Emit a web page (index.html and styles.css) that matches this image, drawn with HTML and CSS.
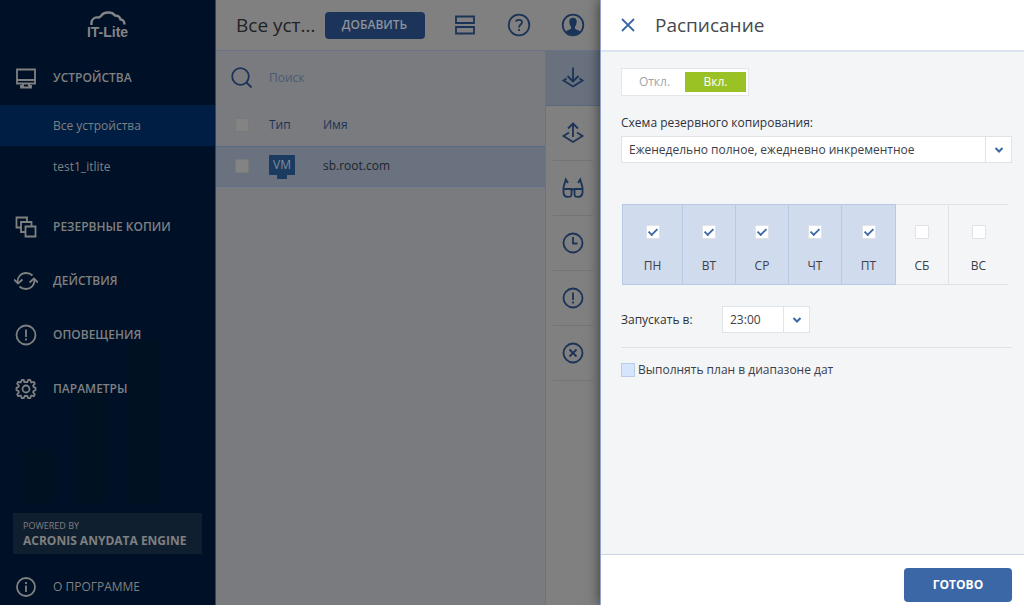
FILE: index.html
```
<!DOCTYPE html>
<html lang="ru">
<head>
<meta charset="utf-8">
<title>Расписание</title>
<meta name="viewport" content="width=device-width, initial-scale=1">
<link rel="stylesheet" href="styles.css">
</head>
<body>
<div class="app">
  <aside class="sidebar">
    <div class="logo">
      <svg class="logo-cloud" width="36" height="14" viewBox="0 0 36 14"><path d="M1.500 14V11C2 8 5 6 8.500 6.500C9.500 6.500 10.500 5.500 11 5C14 .5 22 .5 25 4.500C28 4.500 30 6.500 30.500 8.500C33 8.500 34.500 11 34.500 13.500" fill="none" stroke="currentColor" stroke-width="2.400"/></svg>
      <span class="logo-name">IT-Lite</span>
    </div>
    <nav class="nav">
      <a class="nav-item" href="#"><svg class="ico" width="24" height="24" viewBox="0 0 24 24"><path d="M3 3.500H21V17.500H3ZM3 14H21M9 17.500V20H7V21.500H17V20H15V17.500"/></svg>УСТРОЙСТВА</a>
      <a class="nav-sub nav-sub-active" href="#">Все устройства</a>
      <a class="nav-sub nav-last-sub" href="#">test1_itlite</a>
      <a class="nav-item" href="#"><svg class="ico" width="24" height="24" viewBox="0 0 24 24"><path d="M7 12.500H2.500V2.500H13V6M11 17H7V7H17.500V11M11.500 11.500H21.500V21.500H11.500Z"/></svg>РЕЗЕРВНЫЕ КОПИИ</a>
      <a class="nav-item" href="#"><svg class="ico" width="24" height="24" viewBox="0 0 24 24"><path d="M3.500 14C3 8 7 4 12 4C15 4 17 5 18.500 6.500M0 10.500L4 14.500L8.500 10.500M20.500 10C21 16 17 20 12 20C9 20 7 19 5.500 17.500M24 13.500L20 9.500L15.500 13.500"/></svg>ДЕЙСТВИЯ</a>
      <a class="nav-item" href="#"><svg class="ico" width="24" height="24" viewBox="0 0 24 24"><circle cx="12" cy="12" r="9.500"/><path d="M12 6.500V14M12 15.500V17.500"/></svg>ОПОВЕЩЕНИЯ</a>
      <a class="nav-item" href="#"><svg class="ico" width="24" height="24" viewBox="0 0 24 24"><circle cx="12" cy="12" r="3.500"/><path stroke-linejoin="round" d="M10.200 5.200L9.800 2.800H7.800L6.800 5.500L4.200 4.800L3.200 6.600L4.900 8.800L4.300 10.200L2.500 10.800V13.200L4.300 13.800L4.900 15.200L3.200 17.400L4.200 19.200L6.800 18.500L7.800 21.200H9.800L10.600 19H13.400L14.200 21.200H16.200L17.200 18.500L19.800 19.200L20.800 17.400L19.100 15.200L19.700 13.800L21.500 13.200V10.800L19.700 10.200L19.100 8.800L20.800 6.600L19.800 4.800L17.200 5.500L16.200 2.800H14.200L13.400 5.200Z"/></svg>ПАРАМЕТРЫ</a>
    </nav>
    <div class="powered"><span class="powered-by">POWERED BY</span><span class="powered-name">ACRONIS ANYDATA ENGINE</span></div>
    <a class="about" href="#"><svg class="ico" width="24" height="24" viewBox="0 0 24 24"><circle cx="12" cy="12" r="9"/><path d="M12 7V9M12 10.500V17"/></svg>О ПРОГРАММЕ</a>
  </aside>

  <main class="main">
    <header class="main-head">
      <h1 class="title">Все уст...</h1>
      <button class="add" type="button">ДОБАВИТЬ</button>
      <div class="tools">
        <button class="icon-btn" type="button" aria-label="Вид"><svg class="ico" width="24" height="24" viewBox="0 0 24 24"><path d="M3 3.500H21V10H3ZM3 14H21V20.500H3Z"/></svg></button>
        <button class="icon-btn" type="button" aria-label="Справка"><svg class="ico" width="24" height="24" viewBox="0 0 24 24"><circle cx="12" cy="12" r="10.300"/><path d="M9 8.500C9.500 6.500 15 6 15 9.200C15 11.500 12 11.500 12 14.500M12 16V18"/></svg></button>
        <button class="icon-btn" type="button" aria-label="Учётная запись"><svg class="ico" width="24" height="24" viewBox="0 0 24 24"><circle cx="12" cy="12" r="10.300"/><path class="solid" d="M8.300 8C8.300 3.500 15.700 3.500 15.700 8C15.700 11 15 12.500 14 13.500V15.500C15 17 18 17 19 18.500C16 23 8 23 5 18.500C6 17 9 17 10 15.500V13.500C9 12.500 8.300 11 8.300 8Z"/></svg></button>
      </div>
    </header>
    <div class="main-body">
      <section class="devices">
        <label class="search"><svg class="ico" width="24" height="24" viewBox="0 0 24 24"><circle cx="10.500" cy="10.500" r="8.300"/><path d="M16.500 16.500L21.500 21.500"/></svg><input class="search-input" type="search" placeholder="Поиск" aria-label="Поиск"></label>
        <table class="table">
          <thead><tr><th class="c-check"><input class="check" type="checkbox" aria-label="Выбрать все"></th><th class="c-type">Тип</th><th>Имя</th></tr></thead>
          <tbody><tr><td><input class="check" type="checkbox" aria-label="Выбрать sb.root.com"></td><td><span class="vm">VM</span></td><td>sb.root.com</td></tr></tbody>
        </table>
      </section>
      <div class="rail">
        <button class="rail-btn rail-active" type="button" aria-label="Резервное копирование"><svg class="ico" width="24" height="24" viewBox="0 0 24 24"><path d="M12 1.500V15.500M6.500 10L12 15.500L17.500 10M5.500 12.500L2.500 14.500L12 20.500L21.500 14.500L18.500 12.500"/></svg></button>
        <button class="rail-btn" type="button" aria-label="Восстановление"><svg class="ico" width="24" height="24" viewBox="0 0 24 24"><path d="M12 16V2.500M7 7.500L12 2.500L17 7.500M8 11.500L2.500 15L12 21L21.500 15L16 11.500"/></svg></button>
        <button class="rail-btn" type="button" aria-label="Обзор"><svg class="ico" width="24" height="24" viewBox="0 0 24 24"><path d="M2.500 14V11.500L4.800 3.500L7 7M21.500 14V11.500L19.200 3.500L17 7M2.500 13H10.500V18C10.500 21 9 20.800 6.500 20.800C4 20.800 3 20 2.500 17ZM13.500 13H21.500V17C21 20 20 20.800 17.500 20.800C15 20.800 13.500 21 13.500 18ZM10.500 13.500H13.500"/></svg></button>
        <button class="rail-btn" type="button" aria-label="История"><svg class="ico" width="24" height="24" viewBox="0 0 24 24"><circle cx="12" cy="12" r="9.500"/><path d="M12 6V12.500H16.500"/></svg></button>
        <button class="rail-btn" type="button" aria-label="Оповещения"><svg class="ico" width="24" height="24" viewBox="0 0 24 24"><circle cx="12" cy="12" r="9.500"/><path d="M12 6.500V14M12 15.500V17.500"/></svg></button>
        <button class="rail-btn" type="button" aria-label="Удалить"><svg class="ico" width="24" height="24" viewBox="0 0 24 24"><circle cx="12" cy="12" r="9.500"/><path d="M8.500 8.500L15.500 15.500M15.500 8.500L8.500 15.500"/></svg></button>
      </div>
    </div>
  </main>

  <form class="panel">
    <header class="panel-head">
      <button class="close" type="button" aria-label="Закрыть"><svg class="ico" width="14" height="14" viewBox="0 0 14 14"><path d="M1 1L13 13M13 1L1 13"/></svg></button>
      <h2 class="title">Расписание</h2>
    </header>
    <div class="panel-body">
      <div class="switch">
        <button class="switch-opt" type="button">Откл.</button><button class="switch-opt switch-on" type="button">Вкл.</button>
      </div>
      <label class="field-label" for="scheme">Схема резервного копирования:</label>
      <div class="combo">
        <select class="combo-select" id="scheme"><option>Еженедельно полное, ежедневно инкрементное</option></select>
        <span class="combo-arrow"><svg class="ico" width="10" height="8" viewBox="0 0 10 8"><path d="M1.500 2L5 5.500L8.500 2"/></svg></span>
      </div>
      <div class="days">
        <label class="day day-on"><input class="check" type="checkbox" checked>ПН</label>
        <label class="day day-on"><input class="check" type="checkbox" checked>ВТ</label>
        <label class="day day-on"><input class="check" type="checkbox" checked>СР</label>
        <label class="day day-on"><input class="check" type="checkbox" checked>ЧТ</label>
        <label class="day day-on"><input class="check" type="checkbox" checked>ПТ</label>
        <label class="day"><input class="check" type="checkbox">СБ</label>
        <label class="day"><input class="check" type="checkbox">ВС</label>
      </div>
      <div class="time-row">
        <label class="time-label" for="time">Запускать в:</label>
        <div class="combo combo-time">
          <select class="combo-select" id="time"><option>23:00</option></select>
          <span class="combo-arrow"><svg class="ico" width="10" height="8" viewBox="0 0 10 8"><path d="M1.500 2L5 5.500L8.500 2"/></svg></span>
        </div>
      </div>
      <label class="range"><input class="check check-blue" type="checkbox">Выполнять план в диапазоне дат</label>
    </div>
    <footer class="panel-foot"><button class="done" type="button">ГОТОВО</button></footer>
  </form>
</div>
</body>
</html>
```
FILE: styles.css
```
* { box-sizing: border-box; }
body { margin: 0; font: 12px/20px "Open Sans", "Noto Sans", sans-serif; color: #3c4046; }
button, input, select { font: inherit; color: inherit; }
button { border: 0; padding: 0; background: none; cursor: pointer; }
a { color: inherit; text-decoration: none; }
.ico { display: block; flex: none; fill: none; stroke: currentColor; stroke-width: 1.8; }
.solid { fill: currentColor; stroke: none; }
.app { display: flex; min-height: 100vh; }
.title { margin: 0; font-size: 19px; line-height: 28px; font-weight: 400; white-space: nowrap; }

/* Sidebar */
.sidebar {
  width: 216px; flex: none; display: flex; flex-direction: column;
  background:
    linear-gradient(#001122, #001122) 21px calc(100% - 102px) / 32px 53px no-repeat,
    linear-gradient(#001122, #001122) 75px calc(100% - 102px) / 32px 110px no-repeat,
    linear-gradient(#001122, #001122) 129px calc(100% - 102px) / 32px 163px no-repeat,
    #001027;
  color: #7f8080; border-right: 1px solid #3a4350;
}
.logo { height: 51px; padding-top: 11px; display: flex; flex-direction: column; align-items: center; color: #848586; }
.logo-cloud { display: block; }
.logo-name { font: 700 14px/15px "Liberation Sans", Arial, sans-serif; }
.nav { flex: 1; }
.nav-item { height: 54px; padding-left: 14px; display: flex; align-items: center; gap: 15px; font-weight: 600; }
.nav-sub { height: 41px; padding-left: 53px; display: flex; align-items: center; }
.nav-sub-active { background: #001e43; }
.nav-last-sub { margin-bottom: 13px; }
.powered { margin: 0 13px 15px 13px; padding: 6px 10px 5px; background: #101f30; display: flex; flex-direction: column; white-space: nowrap; }
.powered-by { font-size: 9px; line-height: 13px; }
.powered-name { font-size: 12px; line-height: 17px; font-weight: 700; }
.about { height: 36px; padding-left: 14px; display: flex; align-items: center; gap: 15px; }

/* Dimmed main area */
.main { flex: 1; min-width: 0; display: flex; flex-direction: column; background: #808080; color: #1c3358; }
.main-head { height: 51px; padding: 0 15px 0 20px; display: flex; align-items: center; border-bottom: 1px solid #69748a; }
.main-head .title { color: #202226; margin-right: 9px; }
.add { width: 100px; height: 27px; border-radius: 4px; background: #1c345a; color: #8d9299; font-weight: 600; }
.tools { margin-left: auto; display: flex; gap: 30px; }
.main-body { flex: 1; display: flex; }
.devices { flex: 1; background: #7a7b7e; }
.search { height: 54px; padding-left: 14px; display: flex; align-items: center; gap: 15px; }
.search-input { flex: 1; min-width: 0; border: 0; padding: 0; background: none; outline: 0; }
.search-input::placeholder { color: #4a5a75; opacity: 1; }
.table { width: 100%; border-collapse: collapse; table-layout: fixed; }
.table th { height: 41px; padding: 0; font-weight: 400; text-align: left; }
.table td { height: 40px; padding: 0; background: #69727e; border-top: 1px solid #566a85; border-bottom: 1px solid #5f6f87; color: #20242c; }
.c-check { width: 53px; }
.c-type { width: 54px; }
.table .check { margin-left: 19px; background-color: #838383; border-color: #797979; }
.vm {
  display: block; width: 26px; height: 24px; line-height: 20px; text-align: center; color: #7f8d9e; margin-top: 2px;
  background: linear-gradient(#1c3b60, #1c3b60) 0 0 / 100% 20px no-repeat, linear-gradient(#1c3b60, #1c3b60) center bottom / 10px 4px no-repeat;
}
.rail { width: 55px; border-left: 1px solid #66738c; display: flex; flex-direction: column; }
.rail-btn { height: 55px; margin: 0 7px; border-bottom: 1px solid #727477; display: flex; align-items: center; justify-content: center; }
.rail-active { margin: 0; background: #68717d; border-color: #59687f; }

/* Schedule panel */
.panel {
  width: 424px; flex: none; display: flex; flex-direction: column; z-index: 1;
  background: #fff; border-left: 1px solid #91a6ca; box-shadow: 0 0 12px rgba(0, 0, 0, .6);
}
.panel-head { height: 52px; padding-left: 20px; display: flex; align-items: center; gap: 20px; border-bottom: 2px solid #dbe4f0; }
.panel-head .title { color: #45494f; }
.close { color: #3b67a6; }
.panel-body { flex: 1; padding: 16px 12px 16px 20px; background: #f3f5f7; }
.switch { width: 128px; height: 28px; padding: 3px 2px; display: flex; background: #fff; border: 1px solid #e3e7eb; }
.switch-opt { flex: 1; color: #a0a4aa; line-height: 20px; }
.switch-on { background: #9bc225; color: #fff; }
.field-label { display: block; margin: 17px 0 3px; line-height: 20px; color: #2e3238; }
.combo { position: relative; height: 27px; background: #fff; border: 1px solid #dfe4e9; }
.combo-select { display: block; width: 100%; height: 100%; padding: 0 26px 0 7px; border: 0; background: none; appearance: none; outline: 0; }
.combo-arrow { position: absolute; top: 0; right: 0; bottom: 0; width: 26px; display: flex; align-items: center; justify-content: center; border-left: 1px solid #dfe4e9; color: #3b67a6; pointer-events: none; }
.combo-arrow .ico { stroke-width: 2; }
.check {
  appearance: none; flex: none; display: block; width: 14px; height: 14px; margin: 0;
  background: #fff; border: 1px solid #dfe3e8;
}
.check:checked { display: grid; place-items: center; }
.check:checked::before { content: ""; width: 8px; height: 4px; border: solid #3b67a6; border-width: 0 0 2px 2px; transform: translateY(-1px) rotate(-45deg) scale(.9); }
.days { display: grid; grid-template-columns: 61fr 53fr 53fr 53fr 54fr 53fr 59fr; margin: 41px 4px 0 1px; }
.day {
  height: 81px; padding-top: 20px; display: flex; flex-direction: column; align-items: center; gap: 17px;
  border: solid #dfe2e6; border-width: 1px 1px 1px 0;
}
.day:last-child { border-right: 0; }
.day-on { background: #d0dced; border-color: #b7c9e4; }
.day-on:first-child { border-left-width: 1px; }
.time-row { height: 63px; padding-top: 21px; display: flex; border-bottom: 1px solid #dfe2e6; }
.time-label { width: 101px; line-height: 27px; color: #2e3238; }
.combo-time { width: 88px; }
.range { margin-top: 12px; display: flex; align-items: center; gap: 3px; }
.check-blue { background: #d5e5fc; border-color: #b7cdea; }
.panel-foot { height: 51px; padding: 0 12px 3px; display: flex; align-items: flex-end; justify-content: flex-end; border-top: 1px solid #c8d6e8; }
.done { width: 108px; height: 34px; border-radius: 4px; background: #3b67a6; color: #fff; font-weight: 700; }
```
